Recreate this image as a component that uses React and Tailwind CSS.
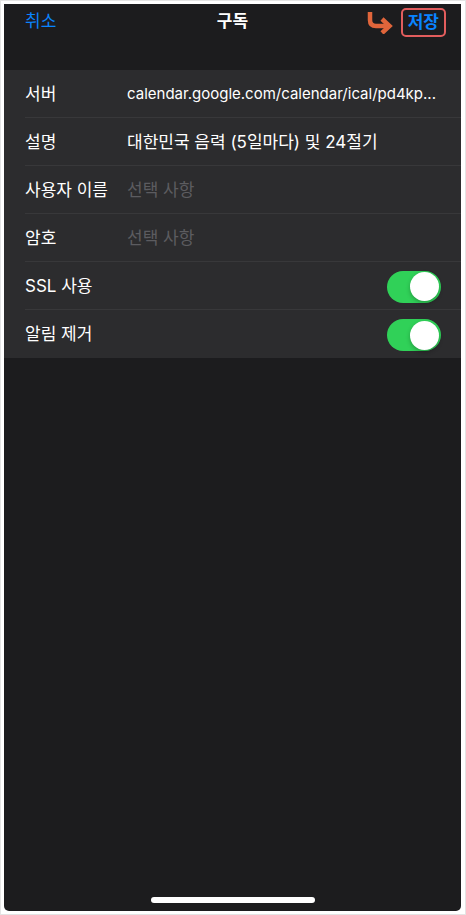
import React from 'react'

const font = { fontFamily: 'Inter, "Noto Sans CJK KR", sans-serif' }

const rows = [
  { label: '서버', value: 'calendar.google.com/calendar/ical/pd4kp...', small: true },
  { label: '설명', value: '대한민국 음력 (5일마다) 및 24절기' },
  { label: '사용자 이름', placeholder: '선택 사항' },
  { label: '암호', placeholder: '선택 사항' },
  { label: 'SSL 사용', toggle: true },
  { label: '알림 제거', toggle: true, last: true },
]

const Toggle = () => (
  <div className="w-[54px] h-[32px] rounded-full bg-[#30d158] flex items-center justify-end px-[2px]">
    <div className="w-[29px] h-[29px] rounded-full bg-white shadow-[0_2px_4px_rgba(0,0,0,0.25)]" />
  </div>
)

const CurveArrow = () => (
  <svg width="27" height="24" viewBox="0 0 27 24" className="mr-[8px]">
    <path
      d="M4 2 V10 Q4 16 10 16 H22"
      fill="none"
      stroke="#e0653b"
      strokeWidth="4.5"
      strokeLinejoin="round"
    />
    <path d="M16 9 L23.5 16 L16 23" fill="none" stroke="#e0653b" strokeWidth="4.5" strokeLinejoin="miter" />
  </svg>
)

export default function App() {
  return (
    <div className="w-[466px] h-[915px] bg-white border border-[#e4e4e4] pt-[3px] pl-[3px] pr-[4px] pb-[3px]" style={font}>
      <div className="h-full bg-[#1c1c1e] rounded-b-[5px] flex flex-col">
        <div className="h-[66px] shrink-0">
          <div className="h-[34px] pt-[2px] flex items-center justify-between pl-[21px] pr-[15px] relative">
            <span className="text-[17px] text-[#0a84ff]">취소</span>
            <span className="absolute left-1/2 -translate-x-1/2 text-[17px] font-semibold text-white">구독</span>
            <div className="flex items-center">
              <CurveArrow />
              <div className="h-[29px] px-[5px] border-2 border-[#e25d5d] rounded-[5px] flex items-center">
                <span className="text-[17px] font-bold text-[#0a84ff] leading-none">저장</span>
              </div>
            </div>
          </div>
        </div>

        <div className="bg-[#2c2c2e]">
          {rows.map((r) => (
            <div key={r.label} className="pl-[21px]">
              <div
                className={`h-[48px] pt-[2px] flex items-center pr-[20px] ${r.last ? '' : 'border-b border-[#38383a]'}`}
              >
                <span className="w-[102px] shrink-0 text-[17px] text-white whitespace-nowrap">{r.label}</span>
                {r.value && (
                  <span className={`${r.small ? 'text-[15px]' : 'text-[17px]'} text-white whitespace-nowrap`}>
                    {r.value}
                  </span>
                )}
                {r.placeholder && <span className="text-[17px] text-[#5c5c60]">{r.placeholder}</span>}
                {r.toggle && (
                  <div className="ml-auto">
                    <Toggle />
                  </div>
                )}
              </div>
            </div>
          ))}
        </div>

        <div className="flex-1 flex flex-col justify-end items-center pb-[8px]">
          <div className="w-[164px] h-[6px] rounded-full bg-white" />
        </div>
      </div>
    </div>
  )
}
